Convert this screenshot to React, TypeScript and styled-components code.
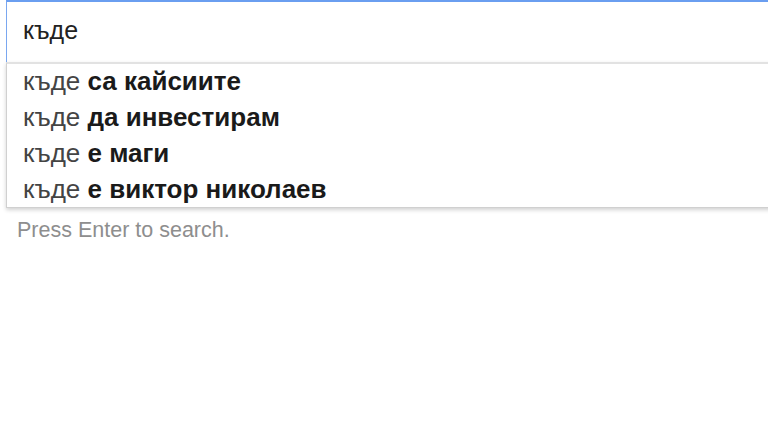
import React from "react";
import styled, { createGlobalStyle } from "styled-components";

const Global = createGlobalStyle`
  html, body { margin: 0; padding: 0; background: #fff; }
  body { font-family: "Liberation Sans", Arial, sans-serif; overflow: hidden; }
`;

const Page = styled.div`
  width: 768px;
  height: 432px;
  overflow: hidden;
  padding-left: 6px;
  box-sizing: border-box;
`;

const SearchBox = styled.div`
  width: 800px;
  height: 62px;
  box-sizing: border-box;
  border-top: 2px solid #6a9ef0;
  border-left: 1px solid #7aa7f0;
  display: flex;
  align-items: center;
  padding-left: 16px;
  font-size: 25px;
  color: #222;
  padding-bottom: 4px;
`;

const Dropdown = styled.div`
  width: 800px;
  box-sizing: border-box;
  border: 1px solid #d0d0d0;
  border-top: 2px solid #e2e2e2;
  border-right: none;
  background: #fff;
  box-shadow: 0 2px 4px rgba(0, 0, 0, 0.18);
`;

const Row = styled.div`
  height: 36px;
  display: flex;
  align-items: center;
  padding-left: 16px;
  font-size: 26px;
  color: #444;
  white-space: pre;
  &:first-child {
    height: 35px;
  }
`;

const Bold = styled.b`
  font-weight: bold;
  color: #1a1a1a;
`;

const Hint = styled.div`
  margin-top: 10px;
  padding-left: 11px;
  font-size: 21.5px;
  color: #8e8e8e;
`;

const items = ["са кайсиите", "да инвестирам", "е маги", "е виктор николаев"];

export default function App() {
  return (
    <Page>
      <Global />
      <SearchBox>къде</SearchBox>
      <Dropdown>
        {items.map((t) => (
          <Row key={t}>
            къде <Bold>{t}</Bold>
          </Row>
        ))}
      </Dropdown>
      <Hint>Press Enter to search.</Hint>
    </Page>
  );
}
